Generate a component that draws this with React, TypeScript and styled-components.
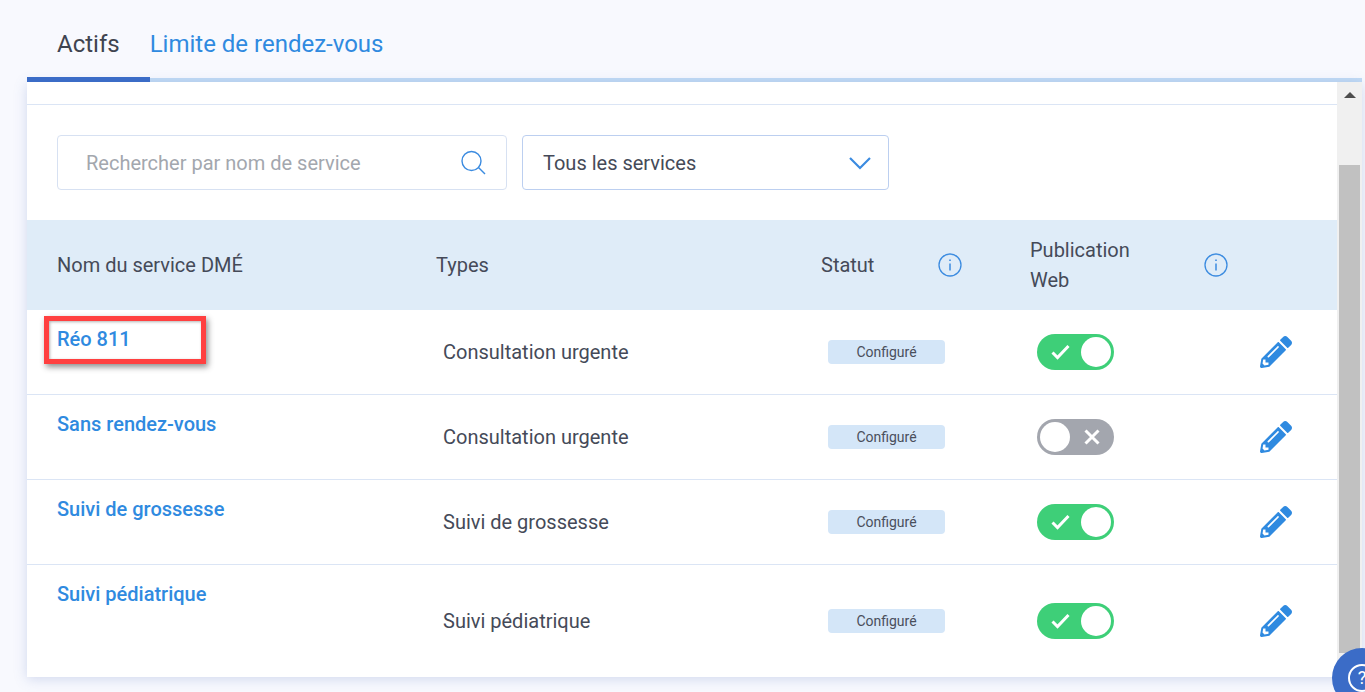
import { FaPencilAlt } from 'react-icons/fa';
import styled, { createGlobalStyle } from 'styled-components';

const services = [
  { name: 'Réo 811', type: 'Consultation urgente', published: true, flagged: true },
  { name: 'Sans rendez-vous', type: 'Consultation urgente', published: false },
  { name: 'Suivi de grossesse', type: 'Suivi de grossesse', published: true },
  { name: 'Suivi pédiatrique', type: 'Suivi pédiatrique', published: true, tall: true },
];

const InfoIcon = () => (
  <svg width="24" height="24" viewBox="0 0 24 24" fill="none" stroke="#3b8be0" strokeWidth="1.3">
    <circle cx="12" cy="12" r="11" />
    <path d="M12 10.5v7" strokeWidth="1.5" />
    <path d="M12 6.5v1.6" strokeWidth="1.6" />
  </svg>
);

const App = () => (
  <>
    <GlobalStyle />
    <Page>
      <Tabs>
        <Tab $active>Actifs</Tab>
        <Tab>Limite de rendez-vous</Tab>
      </Tabs>
      <Card>
        <Content>
          <TopStrip />
          <Filters>
            <SearchBox>
              <Placeholder>Rechercher par nom de service</Placeholder>
              <svg width="26" height="26" viewBox="0 0 26 26" fill="none" stroke="#3b8be0" strokeWidth="1.4">
                <circle cx="11.5" cy="11" r="9.5" />
                <path d="M18.5 17.5l6.5 6.5" />
              </svg>
            </SearchBox>
            <SelectBox>
              <span>Tous les services</span>
              <svg width="24" height="14" viewBox="0 0 24 14" fill="none" stroke="#3b8be0" strokeWidth="2.2">
                <path d="M2 2l10 10L22 2" />
              </svg>
            </SelectBox>
          </Filters>
          <HeaderRow>
            <HeaderCell>Nom du service DMÉ</HeaderCell>
            <HeaderCell>Types</HeaderCell>
            <HeaderCell>
              <StatusHead>
                Statut
                <InfoIcon />
              </StatusHead>
            </HeaderCell>
            <HeaderCell>
              <WebHead>
                <WebLabel>Publication Web</WebLabel>
                <InfoIcon />
              </WebHead>
            </HeaderCell>
            <HeaderCell />
          </HeaderRow>
          {services.map((service) => (
            <Row key={service.name} $tall={service.tall}>
              <NameCell>
                <NameLink>{service.name}</NameLink>
                {service.flagged && <Highlight />}
              </NameCell>
              <TypeCell>{service.type}</TypeCell>
              <Cell>
                <Chip>Configuré</Chip>
              </Cell>
              <Cell>
                <Toggle $on={service.published}>
                  {service.published ? (
                    <svg width="20" height="16" viewBox="0 0 20 16" fill="none" stroke="#fff" strokeWidth="3">
                      <path d="M1.5 8.5l5 5L17.5 2" />
                    </svg>
                  ) : (
                    <svg width="16" height="16" viewBox="0 0 16 16" fill="none" stroke="#fff" strokeWidth="3">
                      <path d="M1.5 1.5l13 13M14.5 1.5l-13 13" />
                    </svg>
                  )}
                  <Knob />
                </Toggle>
              </Cell>
              <EditCell>
                <FaPencilAlt size={32} color="#2f8ae0" />
              </EditCell>
            </Row>
          ))}
        </Content>
        <Scrollbar>
          <ArrowUp />
          <Thumb />
        </Scrollbar>
      </Card>
      <HelpButton>
        <HelpMark>?</HelpMark>
      </HelpButton>
    </Page>
  </>
);

const GlobalStyle = createGlobalStyle`
  html, body {
    margin: 0;
    height: 100%;
    overflow: hidden;
    background: #f8f9fe;
    font-family: Roboto, "Liberation Sans", sans-serif;
  }
`;

const Page = styled.div`
  height: 692px;
  padding: 0 3px 0 27px;
  box-sizing: border-box;
  overflow: hidden;
`;

const Tabs = styled.div`
  display: flex;
  height: 82px;
  box-sizing: border-box;
  border-bottom: 4px solid #c2dbf5;
`;

const Tab = styled.div<{ $active?: boolean }>`
  height: 82px;
  box-sizing: border-box;
  padding: 29px 30px 0 ${(p) => (p.$active ? '30px' : '0')};
  margin-left: ${(p) => (p.$active ? '0' : '0')};
  font-size: 24px;
  line-height: 30px;
  color: ${(p) => (p.$active ? '#3f4450' : '#2f8ae0')};
  border-bottom: ${(p) => (p.$active ? '5px solid #3b6cc7' : 'none')};
`;

const Card = styled.div`
  display: flex;
  height: 595px;
  background: #fff;
  box-shadow: 0 2px 12px rgba(90, 120, 190, 0.25);
`;

const Content = styled.div`
  flex: 1;
  min-width: 0;
`;

const TopStrip = styled.div`
  height: 22px;
  border-bottom: 1px solid #dbe5f5;
`;

const Filters = styled.div`
  display: flex;
  gap: 15px;
  padding: 30px 30px;
`;

const SearchBox = styled.div`
  width: 450px;
  height: 55px;
  box-sizing: border-box;
  display: flex;
  align-items: center;
  justify-content: space-between;
  padding: 0 20px 0 28px;
  border: 1px solid #d7e1f2;
  border-radius: 4px;
`;

const Placeholder = styled.span`
  font-size: 20px;
  color: #a3a7ae;
`;

const SelectBox = styled.div`
  width: 367px;
  height: 55px;
  box-sizing: border-box;
  display: flex;
  align-items: center;
  justify-content: space-between;
  padding: 0 16px 0 20px;
  border: 1px solid #bccff0;
  border-radius: 4px;
  font-size: 20px;
  color: #454a58;
`;

const rowColumns = '409px 385px 209px 230px 1fr';

const HeaderRow = styled.div`
  display: grid;
  grid-template-columns: ${rowColumns};
  height: 90px;
  align-items: center;
  background: #dfecf8;
  margin-top: 0;
`;

const HeaderCell = styled.div`
  font-size: 20px;
  line-height: 30px;
  color: #454a58;

  &:first-child {
    padding-left: 30px;
  }
`;

const StatusHead = styled.div`
  display: flex;
  align-items: center;
  justify-content: space-between;
  width: 141px;
`;

const WebHead = styled.div`
  display: flex;
  align-items: center;
  justify-content: space-between;
  width: 198px;
`;

const WebLabel = styled.div`
  width: 120px;
`;

const Row = styled.div<{ $tall?: boolean }>`
  display: grid;
  grid-template-columns: ${rowColumns};
  height: ${(p) => (p.$tall ? '111px' : '85px')};
  align-items: center;
  border-bottom: ${(p) => (p.$tall ? 'none' : '1px solid #dbe5f5')};
  box-sizing: border-box;
`;

const Cell = styled.div`
  padding-left: 7px;
`;

const NameCell = styled.div`
  position: relative;
  align-self: start;
  padding: 16px 0 0 30px;
`;

const NameLink = styled.span`
  font-size: 20px;
  line-height: 26px;
  font-weight: 500;
  color: #2f8ae0;
`;

const Highlight = styled.div`
  position: absolute;
  left: 17px;
  top: 6px;
  width: 162px;
  height: 48px;
  box-sizing: border-box;
  border: 5px solid #ff4040;
  box-shadow: 2px 3px 6px rgba(0, 0, 0, 0.45), inset 1px 1px 3px rgba(0, 0, 0, 0.3);
`;

const TypeCell = styled(Cell)`
  font-size: 20px;
  color: #454a58;
`;

const Chip = styled.div`
  width: 117px;
  height: 24px;
  display: flex;
  align-items: center;
  justify-content: center;
  background: #d4e6f8;
  border-radius: 4px;
  font-size: 14px;
  color: #4a4f5c;
`;

const Toggle = styled.div<{ $on?: boolean }>`
  width: 77px;
  height: 36px;
  box-sizing: border-box;
  border-radius: 18px;
  display: flex;
  flex-direction: ${(p) => (p.$on ? 'row' : 'row-reverse')};
  align-items: center;
  justify-content: space-between;
  padding: ${(p) => (p.$on ? '0 3px 0 14px' : '0 14px 0 3px')};
  background: ${(p) => (p.$on ? '#3ecf78' : '#a3a6ae')};
`;

const Knob = styled.div`
  width: 30px;
  height: 30px;
  border-radius: 50%;
  background: #fff;
`;

const EditCell = styled.div`
  display: flex;
`;

const Scrollbar = styled.div`
  width: 25px;
  flex-shrink: 0;
  display: flex;
  flex-direction: column;
  align-items: center;
  background: #f0f0f0;
`;

const ArrowUp = styled.div`
  margin-top: 10px;
  width: 0;
  height: 0;
  border-left: 6px solid transparent;
  border-right: 6px solid transparent;
  border-bottom: 6px solid #4d4d4d;
`;

const Thumb = styled.div`
  width: 21px;
  height: 488px;
  margin-top: 67px;
  background: #c1c1c1;
`;

const HelpButton = styled.div`
  position: fixed;
  left: 1332px;
  top: 648px;
  width: 60px;
  height: 60px;
  border-radius: 50%;
  background: #3b6cc7;
  display: flex;
  align-items: center;
  justify-content: center;
`;

const HelpMark = styled.div`
  width: 24px;
  height: 24px;
  border: 2px solid #fff;
  border-radius: 50%;
  color: #fff;
  font-size: 18px;
  line-height: 24px;
  text-align: center;
`;

export default App;
